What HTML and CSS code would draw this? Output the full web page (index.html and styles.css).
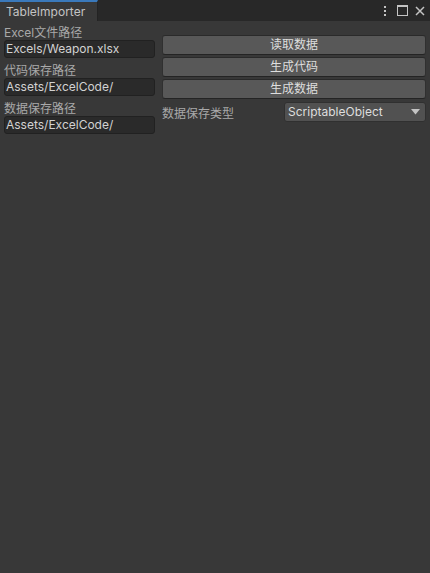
FILE: index.html
```html
<!DOCTYPE html>
<html>
<head>
<meta charset="utf-8">
<link rel="stylesheet" href="styles.css">
</head>
<body>
<div class="tabbar">
  <div class="tab">TableImporter</div>
  <div class="tools">
    <svg class="ico kebab" width="4" height="12" viewBox="0 0 4 12"><rect x="1" y="1" width="2" height="2" fill="#c4c4c4"/><rect x="1" y="5" width="2" height="2" fill="#c4c4c4"/><rect x="1" y="9" width="2" height="2" fill="#c4c4c4"/></svg>
    <svg class="ico" width="11" height="11" viewBox="0 0 11 11"><rect x="0.5" y="0.5" width="10" height="10" fill="none" stroke="#c4c4c4" stroke-width="1"/><rect x="0" y="0" width="11" height="2" fill="#c4c4c4"/></svg>
    <svg class="ico" width="10" height="10" viewBox="0 0 10 10"><path d="M1 1 L9 9 M9 1 L1 9" stroke="#c4c4c4" stroke-width="1.5"/></svg>
  </div>
</div>
<div class="content">
  <div class="left">
    <div class="group">
      <div class="label">Excel文件路径</div>
      <div class="field">Excels/Weapon.xlsx</div>
    </div>
    <div class="group">
      <div class="label">代码保存路径</div>
      <div class="field">Assets/ExcelCode/</div>
    </div>
    <div class="group">
      <div class="label">数据保存路径</div>
      <div class="field">Assets/ExcelCode/</div>
    </div>
  </div>
  <div class="right">
    <div class="btn">读取数据</div>
    <div class="btn">生成代码</div>
    <div class="btn">生成数据</div>
    <div class="row">
      <div class="rowlabel">数据保存类型</div>
      <div class="dropdown">
        <span>ScriptableObject</span>
        <svg width="9" height="6" viewBox="0 0 9 6"><path d="M0 0 H9 L4.5 5.5 Z" fill="#c4c4c4"/></svg>
      </div>
    </div>
  </div>
</div>
</body>
</html>
```
FILE: styles.css
```css
html, body {
  margin: 0;
  padding: 0;
  background: #383838;
  height: 100%;
}
body {
  font-family: Inter, "Noto Sans CJK SC", sans-serif;
  font-size: 12px;
  color: #c4c4c4;
}
.tabbar {
  height: 21px;
  background: #282828;
  display: flex;
  justify-content: space-between;
  align-items: stretch;
}
.tab {
  width: 91px;
  background: #383838;
  border-top: 2px solid #3a79bb;
  border-right: 1px solid #232323;
  padding-left: 6px;
  line-height: 20px;
  color: #c4c4c4;
}
.tools {
  display: flex;
  align-items: center;
  padding-right: 5px;
}
.ico { display: block; }
.kebab { margin-right: 10px; }
.ico + .ico { margin-left: 0; }
.tools .ico:last-child { margin-left: 7px; }
.content {
  display: flex;
  padding: 1px 4px 0 4px;
  gap: 7px;
}
.left {
  width: 151px;
  display: flex;
  flex-direction: column;
  gap: 2px;
}
.label {
  height: 16px;
  padding-top: 2px;
  line-height: 18px;
  color: #a9a9a9;
  white-space: nowrap;
}
.field {
  height: 16px;
  line-height: 16px;
  background: #2a2a2a;
  border: 1px solid #212121;
  border-radius: 3px;
  padding-left: 1px;
  color: #d2d2d2;
  white-space: nowrap;
  overflow: hidden;
}
.right {
  flex: 1;
  padding-top: 13px;
  display: flex;
  flex-direction: column;
  gap: 2px;
}
.btn {
  height: 18px;
  line-height: 18px;
  background: #585858;
  border: 1px solid #303030;
  border-top-color: #2a2a2a;
  border-bottom-color: #242424;
  border-radius: 3px;
  text-align: center;
  color: #dedede;
}
.row {
  display: flex;
  align-items: center;
  height: 21px;
}
.rowlabel {
  width: 122px;
  flex: none;
  color: #a9a9a9;
  white-space: nowrap;
  padding-top: 1px;
}
.dropdown {
  flex: 1;
  height: 18px;
  line-height: 18px;
  background: #515151;
  border: 1px solid #303030;
  border-radius: 3px;
  padding: 0 5px 0 3px;
  display: flex;
  align-items: center;
  justify-content: space-between;
  color: #dedede;
}
```
